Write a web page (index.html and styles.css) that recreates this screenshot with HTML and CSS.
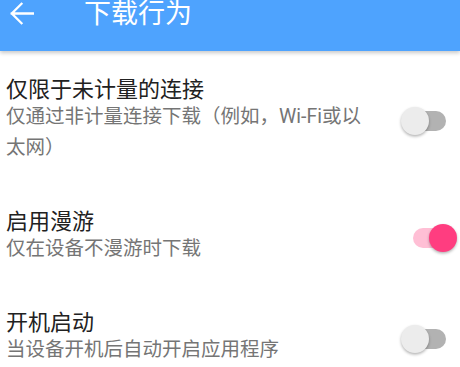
FILE: index.html
```html
<!DOCTYPE html>
<html lang="zh-CN">
<head>
<meta charset="utf-8">
<link rel="stylesheet" href="styles.css">
</head>
<body>
<header class="appbar">
  <svg class="back" width="24" height="24" viewBox="0 0 24 24" aria-hidden="true">
    <path d="M1.8 12.5 H23 M11.5 2.8 L1.8 12.5 L11.5 22.2" fill="none" stroke="#fff" stroke-width="2.3" stroke-linecap="square" stroke-linejoin="miter"/>
  </svg>
  <h1 class="title">下载行为</h1>
</header>
<main class="list">
  <div class="item">
    <div class="text">
      <div class="item-title">仅限于未计量的连接</div>
      <div class="item-sub">仅通过非计量连接下载（例如，Wi-Fi或以太网）</div>
    </div>
    <div class="switch">
      <div class="track"></div>
      <div class="thumb"></div>
    </div>
  </div>
  <div class="item">
    <div class="text">
      <div class="item-title">启用漫游</div>
      <div class="item-sub">仅在设备不漫游时下载</div>
    </div>
    <div class="switch on">
      <div class="track"></div>
      <div class="thumb"></div>
    </div>
  </div>
  <div class="item">
    <div class="text">
      <div class="item-title">开机启动</div>
      <div class="item-sub">当设备开机后自动开启应用程序</div>
    </div>
    <div class="switch">
      <div class="track"></div>
      <div class="thumb"></div>
    </div>
  </div>
</main>
</body>
</html>
```
FILE: styles.css
```css
html, body {
  margin: 0;
  padding: 0;
  background: #ffffff;
  font-family: "Roboto", "Noto Sans CJK SC", sans-serif;
  overflow: hidden;
}

.appbar {
  height: 51px;
  background: #4ea3fe;
  display: flex;
  align-items: flex-start;
  box-shadow: 0 2px 4px rgba(0, 0, 0, 0.22);
  position: relative;
  z-index: 1;
}

.back {
  display: block;
  margin: 1px 0 0 10px;
}

.title {
  margin: 0 0 0 50px;
  font-size: 27px;
  line-height: 28px;
  font-weight: 400;
  color: #ffffff;
}

.list {
  padding-top: 4px;
}

.item {
  display: flex;
  align-items: center;
  padding: 24px 2px 24px 6px;
}

.text {
  flex: 1;
  min-width: 0;
}

.item-title {
  font-size: 22px;
  line-height: 22px;
  color: #212121;
}

.item-sub {
  font-size: 19.5px;
  line-height: 31px;
  color: #757575;
}

.switch {
  position: relative;
  width: 58px;
  height: 30px;
  margin-left: 27px;
  flex: none;
}

.track {
  position: absolute;
  left: 13px;
  top: 5px;
  width: 33px;
  height: 20px;
  border-radius: 10px;
  background: #b2b2b2;
}

.thumb {
  position: absolute;
  left: 1px;
  top: 1px;
  width: 28px;
  height: 28px;
  border-radius: 50%;
  background: #ececec;
  box-shadow: 0 1.5px 3px rgba(0, 0, 0, 0.3);
}

.switch.on .track {
  background: #ffbfd5;
}

.switch.on .thumb {
  left: 29px;
  background: #ff3d80;
}
```
